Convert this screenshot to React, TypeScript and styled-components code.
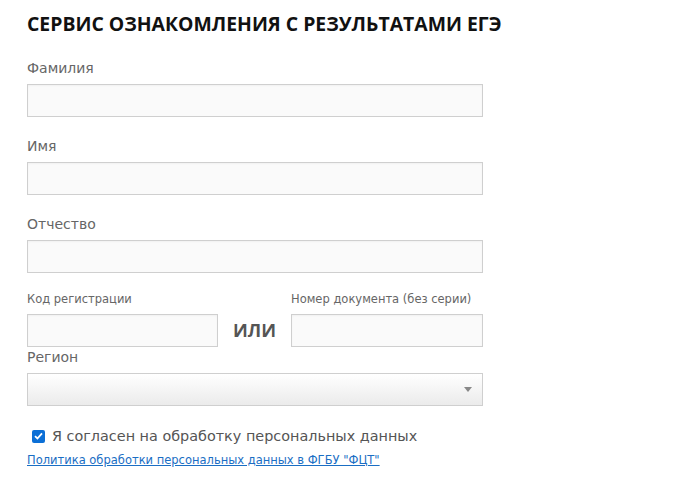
import React from "react";
import styled, { createGlobalStyle } from "styled-components";

const Global = createGlobalStyle`
  html, body { margin: 0; padding: 0; background: #fff; }
  body { font-family: "DejaVu Sans", Verdana, sans-serif; }
`;

const Page = styled.div`
  padding: 11px 27px 0 27px;
  width: 456px;
`;

const Title = styled.h1`
  margin: 0 0 22px 0;
  font-family: "Open Sans", "Noto Sans", sans-serif;
  font-weight: 700;
  font-size: 19.4px;
  line-height: 26px;
  color: #111;
  white-space: nowrap;
`;

const Label = styled.div<{ $small?: boolean }>`
  font-size: ${(p) => (p.$small ? "11.5px" : "14px")};
  line-height: ${(p) => (p.$small ? "16px" : "18px")};
  color: #666;
  margin-bottom: 7px;
  white-space: nowrap;
`;

const Field = styled.div<{ $gap?: number }>`
  margin-bottom: ${(p) => (p.$gap ?? 20)}px;
`;

const Input = styled.div`
  box-sizing: border-box;
  width: 100%;
  height: 33px;
  border: 1px solid #cfcfcf;
  background: #fafafa;
  box-shadow: inset 0 1px 2px rgba(0, 0, 0, 0.04);
`;

const Pair = styled.div`
  display: grid;
  grid-template-columns: 191px 1fr 192px;
  align-items: end;
  margin-bottom: 1px;
`;

const Col = styled.div`
  display: flex;
  flex-direction: column;
`;

const Or = styled.div`
  font-family: "Open Sans", "Noto Sans", sans-serif;
  font-weight: 700;
  font-size: 18px;
  color: #555;
  text-align: center;
  height: 33px;
  line-height: 33px;
`;

const Select = styled.div`
  box-sizing: border-box;
  height: 33px;
  border: 1px solid #cfcfcf;
  background: linear-gradient(#ffffff, #ebebeb);
  display: flex;
  align-items: center;
  justify-content: flex-end;
  padding-right: 10px;
`;

const Arrow = styled.div`
  width: 0;
  height: 0;
  border-left: 4px solid transparent;
  border-right: 4px solid transparent;
  border-top: 5px solid #888;
`;

const CheckRow = styled.label`
  display: flex;
  align-items: center;
  gap: 7px;
  margin: 21px 0 0 5px;
  height: 18px;
  font-size: 14.4px;
  color: #555;
  white-space: nowrap;
`;

const Box = styled.span`
  width: 13px;
  height: 13px;
  border-radius: 2px;
  background: #0b6fd6;
  display: inline-flex;
  align-items: center;
  justify-content: center;
  flex: none;
`;

const Link = styled.a`
  display: block;
  margin-top: 8px;
  font-size: 11.5px;
  line-height: 15px;
  color: #1a6ec4;
  text-decoration: underline;
  white-space: nowrap;
`;

export default function App() {
  return (
    <>
      <Global />
      <Page>
        <Title>СЕРВИС ОЗНАКОМЛЕНИЯ С РЕЗУЛЬТАТАМИ ЕГЭ</Title>
        <Field>
          <Label>Фамилия</Label>
          <Input />
        </Field>
        <Field>
          <Label>Имя</Label>
          <Input />
        </Field>
        <Field $gap={18}>
          <Label>Отчество</Label>
          <Input />
        </Field>
        <Pair>
          <Col>
            <Label $small>Код регистрации</Label>
            <Input />
          </Col>
          <Or>ИЛИ</Or>
          <Col>
            <Label $small>Номер документа (без серии)</Label>
            <Input />
          </Col>
        </Pair>
        <Label>Регион</Label>
        <Select>
          <Arrow />
        </Select>
        <CheckRow>
          <Box>
            <svg width="9" height="8" viewBox="0 0 9 8">
              <path d="M1 4.2 L3.4 6.5 L8 1.3" fill="none" stroke="#fff" strokeWidth="1.8" />
            </svg>
          </Box>
          Я согласен на обработку персональных данных
        </CheckRow>
        <Link href="#">Политика обработки персональных данных в ФГБУ "ФЦТ"</Link>
      </Page>
    </>
  );
}
